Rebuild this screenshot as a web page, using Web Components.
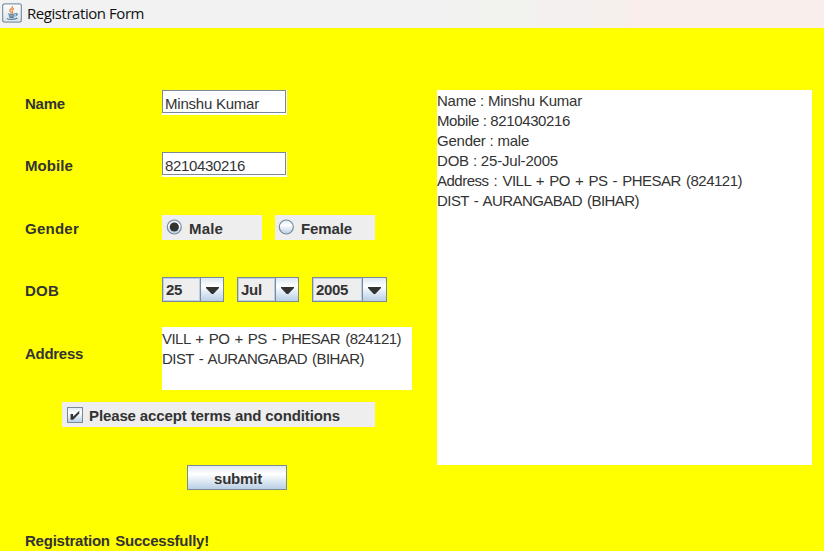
<!DOCTYPE html>
<html lang="en">
<head>
<meta charset="utf-8">
<title>Registration Form</title>
<style>
html,body{margin:0;height:100%;overflow:hidden}
body{font:15px/20px "Liberation Sans",Arial,sans-serif;color:#333}
</style>
</head>
<body>
<app-window></app-window>
<script>
const define = (name, html, setup) => customElements.define(name, class extends HTMLElement {
  connectedCallback() {
    if (this.shadowRoot) return;
    this.attachShadow({mode: 'open'}).innerHTML = html;
    if (setup) setup(this, this.shadowRoot);
  }
});

// One line of text whose tracking is fitted to an advance width.
define('fit-text', `<style>:host{display:block;white-space:pre}:host([loose]){word-spacing:1.5px}span{display:inline-block;vertical-align:top}</style><span></span>`, (el, root) => {
  const s = root.querySelector('span');
  s.textContent = el.getAttribute('text');
  const w = parseFloat(el.getAttribute('w'));
  if (w) s.style.letterSpacing = ((w - s.getBoundingClientRect().width) / s.textContent.length) + 'px';
});

define('title-bar', `<style>
:host{display:flex;align-items:center;height:28px;box-sizing:border-box;padding:0 0 2px 2px;gap:5px;color:#111;font:15px/20px "Open Sans","Noto Sans",sans-serif;background:linear-gradient(90deg,#f2f2f2 0 440px,#f2f2ee 495px 535px,#f4f0f0 545px 580px,#f5f0eb 600px 620px,#f9eeeb 630px)}
svg{display:block}
</style><svg width="20" height="20" viewBox="0 0 20 20">
<defs><linearGradient id="g" x2="0" y2="1"><stop stop-color="#fff"/><stop offset="1" stop-color="#dfe3e7"/></linearGradient></defs>
<rect x=".6" y=".9" width="18.8" height="18.2" rx="2" fill="url(#g)" stroke="#8198aa" stroke-width="1.3"/>
<path d="M10.5 3c1 2-3.3 3-2.7 4.8.3 1 1.4 1.3 1.5 2.4M12.1 5.4c-3 1.5-2 2.3-1.5 3.2.4.8-.2 1.3-.8 1.8" fill="none" stroke="#e58b43" stroke-width="1.25"/>
<path d="M6 10.8c2 .7 5.6.6 7.4 0M6.8 12.6c1.8.6 4 .5 5.7 0M7.2 14c1.5.6 3.4.6 4.8 0M13.5 10.6c2.5-.4 2.1 2-.2 2.5M4.8 15.3c1.5 1.5 9 1.4 10.6-.3" fill="none" stroke="#557f9e" stroke-width="1.2"/>
</svg><slot></slot>`);

define('form-label', `<style>:host{display:flex;align-items:center;height:25px;font-weight:bold;padding-top:1px}</style><slot></slot>`);

define('text-field', `<style>
:host{display:block;width:125px;height:25px;box-sizing:border-box;background:#fff;padding:0 1px 2px 0}
div{height:23px;box-sizing:border-box;border:1px solid #7a8a99;padding:3px 0 0 2px}
</style><div><slot></slot></div>`);

define('option-box', `<style>
:host{display:flex;align-items:center;box-sizing:border-box;height:25px;background:#eee;padding-left:5px;gap:6px;font-weight:bold}
:host([kind=radio]){padding-left:4px;gap:7px}
:host([kind=radio]:not([checked])){padding-left:3px}
svg{display:block;flex:none}
:host([kind=check]) svg{margin-top:2px}
::slotted(*){padding-top:2px}
</style><svg width="16" height="17" viewBox="0 0 16 17"></svg><slot></slot>`, (el, root) => {
  const on = el.hasAttribute('checked');
  const grad = '<defs><linearGradient id="g" x2="0" y2="1"><stop stop-color="#dde8f3"/><stop offset=".35" stop-color="#fff"/><stop offset="1" stop-color="#b8cfe5"/></linearGradient></defs>';
  root.querySelector('svg').innerHTML = grad + (el.getAttribute('kind') === 'radio'
    ? '<circle cx="8.3" cy="8" r="7" fill="url(#g)" stroke="#7a8a99" stroke-width="1.2"/>' + (on ? '<circle cx="8.3" cy="8" r="4.6" fill="#333"/>' : '')
    : '<rect x=".5" y=".5" width="15" height="15" fill="url(#g)" stroke="#7a8a99"/><path d="M3.6 7h2.5v2.8L12.3 3.8v2.6L6.2 12.8H3.6z" fill="#333"/>');
});

define('combo-box', `<style>
:host{display:flex;box-sizing:border-box;height:25px;border:1px solid #7a8a99;background:#eee;font-weight:bold}
.v{flex:1;box-sizing:border-box;border:1px solid #b8cfe5;padding:1px 0 0 2px;overflow:hidden}
.b{width:var(--arrow,23px);box-sizing:border-box;border-left:1px solid #7a8a99;background:linear-gradient(#dde8f3,#fff 35%,#b8cfe5);display:flex;align-items:center;justify-content:center}
svg{display:block;margin-top:1px}
</style><div class="v"><slot></slot></div><div class="b"><svg width="13" height="7"><path d="M0 0h13v1L7.3 7H5.7L0 1z" fill="#333"/></svg></div>`);

define('text-area', `<style>:host{display:block;background:#fff;padding-top:1px;box-sizing:border-box}</style><slot></slot>`);

define('push-button', `<style>
:host{display:flex;justify-content:center;box-sizing:border-box;width:100px;height:25px;border:1px solid #7a8a99;font-weight:bold;background:linear-gradient(#dde8f3,#fff 35%,#b8cfe5);padding:3px 0 0 2px}
</style><slot></slot>`);

define('registration-form', `<style>
:host{display:grid;grid-template-columns:137px 250px;grid-template-rows:62px 63px 62px 50px 75px 63px 62px 24px;align-items:start;width:387px}
.row{display:flex;gap:13px}
.wide{grid-column:1/-1}
.message{padding-top:4px;font-weight:bold}
.terms{margin-left:37px;width:313px;height:25px}
push-button{margin-left:162px}
</style>
<form-label><fit-text text="Name" w="40"></fit-text></form-label>
<text-field><fit-text text="Minshu Kumar" w="94"></fit-text></text-field>
<form-label><fit-text text="Mobile" w="48"></fit-text></form-label>
<text-field><fit-text text="8210430216" w="80"></fit-text></text-field>
<form-label><fit-text text="Gender" w="54"></fit-text></form-label>
<div class="row"><option-box kind="radio" checked style="width:100px"><fit-text text="Male" w="34"></fit-text></option-box><option-box kind="radio" style="width:100px"><fit-text text="Female" w="51"></fit-text></option-box></div>
<form-label><fit-text text="DOB" w="34"></fit-text></form-label>
<div class="row"><combo-box style="width:62px"><fit-text text="25" w="16"></fit-text></combo-box><combo-box style="width:62px"><fit-text text="Jul" w="21"></fit-text></combo-box><combo-box style="width:75px;--arrow:24px"><fit-text text="2005" w="32"></fit-text></combo-box></div>
<form-label style="margin-top:13px"><fit-text text="Address" w="58"></fit-text></form-label>
<text-area style="height:63px;padding-top:2px"><fit-text loose text="VILL + PO + PS - PHESAR (824121)" w="239"></fit-text><fit-text loose text="DIST - AURANGABAD (BIHAR)" w="202"></fit-text></text-area>
<option-box class="wide terms" kind="check"><fit-text text="Please accept terms and conditions" w="251"></fit-text></option-box>
<push-button class="wide"><fit-text text="submit" w="48"></fit-text></push-button>
<div class="wide message"><fit-text loose text="Registration Successfully!" w="184"></fit-text></div>`);

define('app-window', `<style>
:host{display:flex;flex-direction:column;height:551px;background:#ff0;overflow:hidden}
main{display:flex;align-items:flex-start;gap:25px;padding:62px 12px 0 25px}
.out{width:375px;height:375px}
</style>
<title-bar><fit-text text="Registration Form" w="117"></fit-text></title-bar>
<main><registration-form></registration-form>
<text-area class="out">
<fit-text text="Name : Minshu Kumar" w="145"></fit-text>
<fit-text text="Mobile : 8210430216" w="133"></fit-text>
<fit-text text="Gender : male" w="92"></fit-text>
<fit-text text="DOB : 25-Jul-2005" w="121"></fit-text>
<fit-text loose text="Address : VILL + PO + PS - PHESAR (824121)" w="305"></fit-text>
<fit-text loose text="DIST - AURANGABAD (BIHAR)" w="202"></fit-text>
</text-area></main>`);
</script>
</body>
</html>
